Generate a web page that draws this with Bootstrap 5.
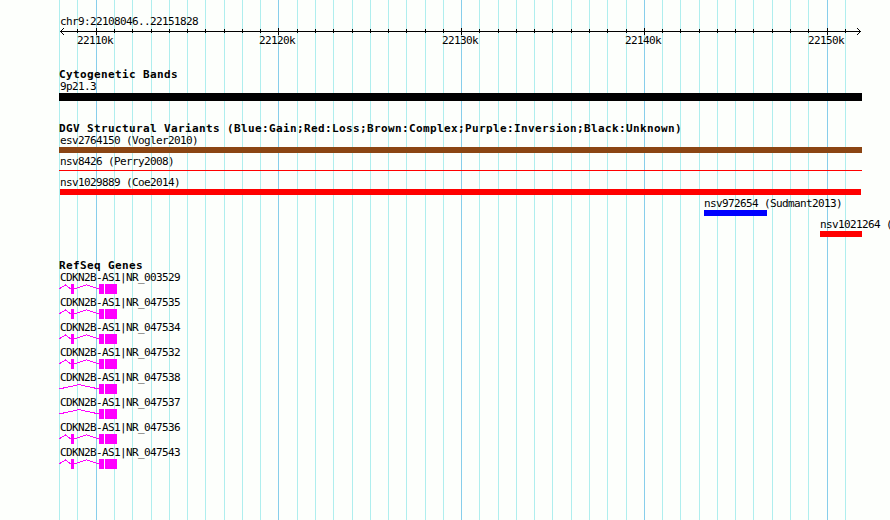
<!DOCTYPE html>
<html lang="en">
<head>
    <meta charset="UTF-8">
    <meta name="viewport" content="width=device-width, initial-scale=1.0">
    <title>chr9:22108046..22151828</title>
    <link href="https://cdn.jsdelivr.net/npm/bootstrap@5.3.3/dist/css/bootstrap.min.css" rel="stylesheet">
    <style>
        body {
            height: 520px;
            background: #fdfffc;
            color: #000;
            font: 11px/14px "DejaVu Sans Mono", monospace;
        }
        svg { display: block; shape-rendering: crispEdges; }
        #gridLines { z-index: -1; }
        #gridLines .minor { fill: #afeeee; }
        #gridLines .major { fill: #87ceeb; }
        .browser { padding: 15px 0 0 59px; }
        .feature-label, #ruler text {
            letter-spacing: -.622px;
            white-space: pre;
        }
        .feature-label { height: 12px; padding-left: 1px; margin-bottom: 1px; }
        .region-label { margin-bottom: 0; }
        .track-title {
            height: 12px;
            margin: 0;
            font-size: 11px;
            line-height: 14px;
            font-weight: 700;
            letter-spacing: .378px;
            white-space: pre;
        }
        #ruler { height: 19px; margin-bottom: 22px; overflow: visible; }
        .track-bands { margin-bottom: 21px; }
        .track-variants { margin-bottom: 20px; }
        .band { width: 803px; height: 8px; background: #000; }
        .feature { height: 21px; }
        .segment { height: 6px; }
        .complex { background: #8b4513; }
        .loss { background: #f00; }
        .gain { background: #00f; }
        .segment.thin { height: 1px; margin-top: 3px; }
        .gene { height: 25px; }
        .gene rect { fill: #f0f; }
        .gene path { fill: none; stroke: #f0f; }
    </style>
</head>
<body class="position-relative overflow-hidden">
    <svg id="gridLines" class="position-absolute top-0 start-0" width="890" height="520"></svg>

    <main class="browser d-flex flex-column">
        <div class="feature-label region-label">chr9:22108046..22151828</div>
        <svg id="ruler" width="831" height="19">
            <path d="M1 4.5H802" stroke="#000"/>
            <path d="M5 1h1M4 2h1M3 3h1M2 4h1M3 5h1M4 6h1M5 7h1" transform="translate(-1 .5)" stroke="#000"/>
            <path d="M799 1h1M800 2h1M801 3h1M802 4h1M801 5h1M800 6h1M799 7h1" transform="translate(-1 .5)" stroke="#000"/>
        </svg>

        <section class="track-bands">
            <h2 class="track-title">Cytogenetic Bands</h2>
            <div class="feature-label">9p21.3</div>
            <div class="band"></div>
        </section>

        <section class="track-variants">
            <h2 class="track-title">DGV Structural Variants (Blue:Gain;Red:Loss;Brown:Complex;Purple:Inversion;Black:Unknown)</h2>
            <div id="variants" class="d-flex flex-column"></div>
        </section>

        <section>
            <h2 class="track-title">RefSeq Genes</h2>
            <div id="genes" class="d-flex flex-column"></div>
        </section>
    </main>

    <script src="https://cdn.jsdelivr.net/npm/bootstrap@5.3.3/dist/js/bootstrap.bundle.min.js"></script>
    <script>
        // One grid line per kilobase, a major one every 10 kb
        let grid = '';
        let ticks = '';
        for (let k = 0; k <= 43; k++) {
            const x = Math.floor(59.7 + k * 18.27);
            const major = k % 10 === 2;
            grid += `<rect class="${major ? 'major' : 'minor'}" x="${x}" width="1" height="520"/>`;
            if (k === 0) continue;
            ticks += `<rect x="${x - 59}" y="${major ? 1 : 2}" width="1" height="${major ? 7 : 4}"/>`;
            if (major) {
                ticks += `<text x="${x - 59 - 19}" y="17">${22110 + (k - 2)}k</text>`;
            }
        }
        document.getElementById('gridLines').innerHTML = grid;
        document.getElementById('ruler').insertAdjacentHTML('beforeend', ticks);

        const variants = [
            { name: 'esv2764150 (Vogler2010)', start: 0, width: 803, type: 'complex' },
            { name: 'nsv8426 (Perry2008)', start: 0, width: 803, type: 'loss thin' },
            { name: 'nsv1029889 (Coe2014)', start: 1, width: 801, type: 'loss' },
            { name: 'nsv972654 (Sudmant2013)', start: 645, width: 63, type: 'gain' },
            { name: 'nsv1021264 (', start: 761, width: 42, type: 'loss' }
        ];
        document.getElementById('variants').innerHTML = variants.map(v => `
            <div class="feature" style="margin-left: ${v.start}px">
                <div class="feature-label" style="padding-left: ${v.start ? 0 : 1}px">${v.name}</div>
                <div class="segment ${v.type}" style="width: ${v.width}px"></div>
            </div>`).join('');

        const genes = ['003529', '047535', '047534', '047532', '047538', '047537', '047536', '047543'];
        // These transcripts skip the first exon
        const skipped = ['047538', '047537'];
        document.getElementById('genes').innerHTML = genes.map(id => {
            const introns = skipped.includes(id)
                ? '<path d="M0 5L20 .6L40 5"/>'
                : '<path d="M0 5L6.5 1L12 5M15 5L27.5 .8L40 5"/><rect x="12" width="3" height="10"/>';
            return `
            <div class="gene">
                <div class="feature-label">CDKN2B-AS1|NR_${id}</div>
                <svg width="58" height="10">${introns}<rect x="40" width="5" height="10"/><rect x="46" width="12" height="10"/></svg>
            </div>`;
        }).join('');
    </script>
</body>
</html>
